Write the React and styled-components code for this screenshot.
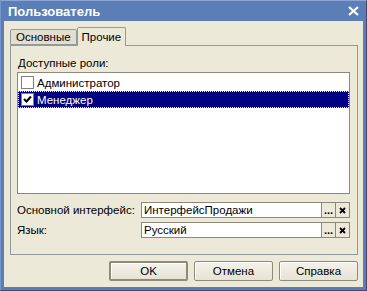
import React from "react";
import styled, { createGlobalStyle } from "styled-components";

const Global = createGlobalStyle`
  html, body { margin: 0; padding: 0; background: #ECE9D8; }
  * { box-sizing: border-box; }
`;

const Window = styled.div`
  width: 367px;
  height: 291px;
  background: #5A7EB5;
  border-top: 1px solid #8AA6D6;
  border-left: 1px solid #7895C8;
  border-right: 1px solid #2E4E86;
  border-bottom: 1px solid #2E4E86;
  display: flex;
  flex-direction: column;
  font-family: "Liberation Sans", Arial, sans-serif;
  font-size: 11px;
  color: #000;
`;

const TitleBar = styled.div`
  height: 21px;
  display: flex;
  align-items: center;
  justify-content: space-between;
  padding: 0 7px 0 7px;
  color: #fff;
  font-weight: bold;
  font-size: 13px;
`;

const Client = styled.div`
  flex: 1;
  margin: 0 3px 3px 3px;
  background: #ECE9D8;
  padding: 6px 5px 6px 6px;
  display: flex;
  flex-direction: column;
`;

const TabStrip = styled.div`
  display: flex;
  align-items: flex-end;
  height: 18px;
  position: relative;
  z-index: 1;
`;

const Tab = styled.div`
  height: ${(p) => (p.$active ? "19px" : "16px")};
  margin-bottom: ${(p) => (p.$active ? "-1px" : "0")};
  padding: 0 ${(p) => (p.$active ? "4px" : "5px")};
  display: flex;
  align-items: center;
  border: 1px solid #919B9C;
  border-bottom: ${(p) => (p.$active ? "none" : "1px solid #919B9C")};
  border-radius: 2px 2px 0 0;
  background: ${(p) => (p.$active ? "#ECE9D8" : "#E3DFD0")};
  font-size: 11.5px;
`;

const Panel = styled.div`
  flex: 0 0 210px;
  border: 1px solid #919B9C;
  background: #ECE9D8;
  padding: 10px 7px 0 6px;
  display: flex;
  flex-direction: column;
`;

const Label = styled.div`
  font-size: 11.5px;
  height: 15px;
  line-height: 15px;
  padding-left: ${(p) => (p.$indent ? "1px" : "0")};
`;

const ListBox = styled.div`
  margin-top: 1px;
  height: 122px;
  background: #fff;
  border: 1px solid #8C8878;
  padding-top: 1px;
`;

const Row = styled.div`
  height: 17px;
  display: flex;
  align-items: center;
  padding-left: 2px;
  background: ${(p) => (p.$selected ? "#000080" : "transparent")};
  color: ${(p) => (p.$selected ? "#fff" : "#000")};
  outline: ${(p) => (p.$selected ? "1px dotted #FFFF80" : "none")};
  outline-offset: -1px;
  font-size: 11.5px;
  gap: 3px;
`;

const Check = styled.span`
  width: 13px;
  height: 13px;
  background: #fff;
  border: 1px solid #7F7F7F;
  display: inline-flex;
  align-items: center;
  justify-content: center;
  margin-left: 1px;
`;

const FieldGrid = styled.div`
  margin-top: 8px;
  display: grid;
  grid-template-columns: 124px 1fr;
  row-gap: 4px;
  align-items: center;
`;

const Field = styled.div`
  height: 16px;
  display: flex;
  background: #fff;
  border: 1px solid #8C8878;
`;

const FieldText = styled.div`
  flex: 1;
  padding-left: 2px;
  line-height: 14px;
  font-size: 11.5px;
`;

const FieldBtn = styled.div`
  width: 14px;
  background: #ECE9D8;
  border-left: 1px solid #8C8878;
  display: flex;
  align-items: center;
  justify-content: center;
  font-size: 11px;
  font-weight: bold;
  line-height: 1;
`;

const ButtonRow = styled.div`
  margin-top: 6px;
  display: flex;
  justify-content: flex-end;
  gap: 6px;
`;

const Button = styled.div`
  width: 79px;
  height: 20px;
  border: ${(p) => (p.$default ? "2px solid #8F8A7C" : "1px solid #8F8A7C")};
  border-radius: 2px;
  background: linear-gradient(#F4F2EA, #E6E2D4);
  display: flex;
  align-items: center;
  justify-content: center;
  font-size: 11.5px;
  box-shadow: inset 1px 1px 0 #fff;
`;

function Checkmark() {
  return (
    <svg width="9" height="9" viewBox="0 0 9 9">
      <path d="M1 4 L3.5 6.5 L8 1.5" stroke="#000" strokeWidth="2" fill="none" />
    </svg>
  );
}

function CrossIcon() {
  return (
    <svg width="7" height="7" viewBox="0 0 7 7">
      <path d="M1 1 L6 6 M6 1 L1 6" stroke="#000" strokeWidth="1.8" />
    </svg>
  );
}

export default function App() {
  return (
    <>
      <Global />
      <Window>
        <TitleBar>
          <span>Пользователь</span>
          <svg width="11" height="10" viewBox="0 0 11 10">
            <path d="M1 1 L10 9 M10 1 L1 9" stroke="#fff" strokeWidth="2.2" />
          </svg>
        </TitleBar>
        <Client>
          <TabStrip>
            <Tab>Основные</Tab>
            <Tab $active>Прочие</Tab>
          </TabStrip>
          <Panel>
            <Label $indent>Доступные роли:</Label>
            <ListBox>
              <Row>
                <Check />
                Администратор
              </Row>
              <Row $selected>
                <Check>
                  <Checkmark />
                </Check>
                Менеджер
              </Row>
            </ListBox>
            <FieldGrid>
              <Label>Основной интерфейс:</Label>
              <Field>
                <FieldText>ИнтерфейсПродажи</FieldText>
                <FieldBtn>...</FieldBtn>
                <FieldBtn>
                  <CrossIcon />
                </FieldBtn>
              </Field>
              <Label>Язык:</Label>
              <Field>
                <FieldText>Русский</FieldText>
                <FieldBtn>...</FieldBtn>
                <FieldBtn>
                  <CrossIcon />
                </FieldBtn>
              </Field>
            </FieldGrid>
          </Panel>
          <ButtonRow>
            <Button $default>OK</Button>
            <Button>Отмена</Button>
            <Button>Справка</Button>
          </ButtonRow>
        </Client>
      </Window>
    </>
  );
}
